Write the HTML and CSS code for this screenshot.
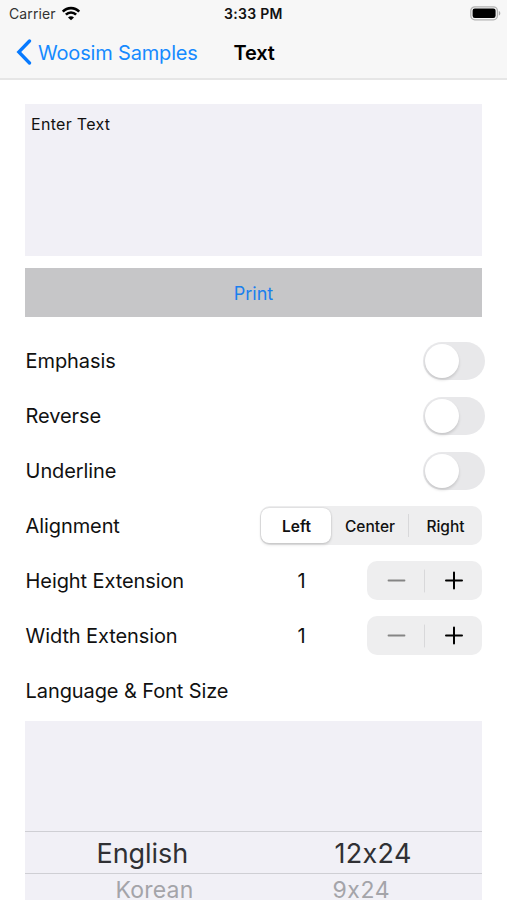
FILE: index.html
```html
<!DOCTYPE html>
<html lang="en">
<head>
<meta charset="utf-8">
<title>Text</title>
<link rel="stylesheet" href="styles.css">
</head>
<body>
<header class="header">
  <div class="status">
    <span class="carrier">Carrier</span>
    <svg class="wifi" width="20" height="15" viewBox="0 0 20 15" fill="none" stroke="#000" stroke-width="2.6"><path d="M1.8 5.6C6.3.9 13.7.9 18.2 5.6"/><path d="M4.9 8.7c2.8-2.9 7.4-2.9 10.2 0"/><path d="M10 14.2 7 11.4c1.7-1.6 4.3-1.6 6 0z" fill="#000" stroke="none"/></svg>
    <span class="clock">3:33 PM</span>
    <svg class="battery" width="31" height="15" viewBox="0 0 31 15"><rect x=".8" y=".8" width="26.6" height="13" rx="4" fill="#f7f7f7" stroke="#b2b2b2" stroke-width="1.3"/><rect x="2.6" y="2.6" width="23" height="9.4" rx="2.2"/><path d="M28.8 5c2 .6 2 4 0 4.6z" fill="#aaa"/></svg>
  </div>
  <nav class="nav">
    <svg class="chevron" width="16" height="26" viewBox="0 0 16 26" fill="none" stroke="#077aff" stroke-width="3.3" stroke-linecap="round" stroke-linejoin="miter"><path d="M13.5 2 2.8 13l10.7 11"/></svg>
    <a class="back">Woosim Samples</a>
    <h1 class="title">Text</h1>
  </nav>
</header>
<main class="main">
  <div class="entry"><span class="entry-text">Enter Text</span></div>
  <button class="print"><span>Print</span></button>
  <div class="row"><span class="label">Emphasis</span><span class="switch"></span></div>
  <div class="row"><span class="label">Reverse</span><span class="switch"></span></div>
  <div class="row"><span class="label">Underline</span><span class="switch"></span></div>
  <div class="row">
    <span class="label">Alignment</span>
    <div class="segments"><span class="segment selected">Left</span><span class="segment">Center</span><span class="segment last">Right</span></div>
  </div>
  <div class="row">
    <span class="label">Height Extension</span><span class="value">1</span>
    <div class="stepper"><svg width="115" height="39" viewBox="0 0 115 39" fill="none" stroke-linecap="round"><path d="M21.5 19.5h16" stroke="#858585" stroke-width="1.8"/><path d="M57.5 9v22" stroke="#d8d8da"/><path d="M79 19.5h16M87 11.5v16" stroke="#000" stroke-width="2"/></svg></div>
  </div>
  <div class="row">
    <span class="label">Width Extension</span><span class="value">1</span>
    <div class="stepper"><svg width="115" height="39" viewBox="0 0 115 39" fill="none" stroke-linecap="round"><path d="M21.5 19.5h16" stroke="#858585" stroke-width="1.8"/><path d="M57.5 9v22" stroke="#d8d8da"/><path d="M79 19.5h16M87 11.5v16" stroke="#000" stroke-width="2"/></svg></div>
  </div>
  <div class="row"><span class="label">Language &amp; Font Size</span></div>
  <div class="picker">
    <div class="option chosen"><span class="english">English</span><span class="size">12x24</span></div>
    <div class="option next"><span class="korean">Korean</span><span class="size-next">9x24</span></div>
  </div>
</main>
</body>
</html>
```
FILE: styles.css
```css
* { box-sizing: border-box; }
body {
  margin: 0;
  height: 900px;
  overflow: hidden;
  background: #fff;
  color: #111;
  font-family: Inter, "Liberation Sans", sans-serif;
  font-feature-settings: "calt" 0;
}
.header {
  height: 80px;
  background: #f7f7f7;
  border-bottom: 2px solid #e6e6e6;
}
.status {
  display: grid;
  grid-template-columns: 52px 163px 1fr 37px;
  height: 27px;
  padding-left: 9px;
  align-items: center;
  font-size: 14px;
}
.carrier { color: #333; letter-spacing: .1px; }
.clock { font-weight: 600; font-size: 14px; letter-spacing: .3px; }
.battery { margin-top: -1px; }
.nav {
  display: flex;
  height: 50px;
  padding-left: 16px;
  align-items: center;
  font-size: 20px;
}
.back { width: 195.5px; margin-left: 6px; padding-top: 1px; color: #168aff; letter-spacing: -.17px; white-space: nowrap; }
.title { margin: 0; padding-top: 1px; color: #000; font-size: 20px; font-weight: 600; letter-spacing: -.2px; }
.main { padding: 24px 25px 0; }
.entry {
  height: 152px;
  padding: 10px 6px;
  background: #f1f0f6;
  font-size: 16px;
  letter-spacing: .3px;
  line-height: 20px;
}
.print {
  display: block;
  width: 457px;
  height: 49px;
  margin: 12px 0 16px;
  padding: 0;
  border: 0;
  background: #c6c6c8;
  color: #1a7fee;
  font: 18px/50px Inter, sans-serif;
}
.print span { position: relative; top: .5px; }
.row {
  display: flex;
  height: 55px;
  align-items: center;
}
.label { flex: 1; padding-left: .6px; font-size: 20px; letter-spacing: -.1px; white-space: nowrap; }
.switch {
  width: 62px;
  height: 38px;
  margin-right: -3px;
  padding: 2px;
  border-radius: 19px;
  background: #e8e8ea;
}
.switch::before {
  content: "";
  display: block;
  width: 34px;
  height: 34px;
  margin-left: -.5px;
  border-radius: 50%;
  background: #fff;
  box-shadow: 0 2px 3px rgba(0, 0, 0, .15);
}
.segments {
  display: grid;
  grid-template-columns: 70px 77px 74px;
  width: 222px;
  height: 39px;
  padding: 2px 0 2px 1px;
  border-radius: 10px;
  background: #eeeeef;
}
.segment {
  display: flex;
  align-items: center;
  justify-content: center;
  padding: 1px 0 0 1px;
  font-size: 15.5px;
  font-weight: 500;
}
.selected {
  border-radius: 8px;
  background: #fff;
  box-shadow: 0 0 2px rgba(0, 0, 0, .18), 0 2px 3px rgba(0, 0, 0, .12);
  font-weight: 600;
}
.last {
  background: linear-gradient(#d8d8da, #d8d8da) left center / 1px 23px no-repeat;
}
.value { width: 20px; margin-right: 55.5px; text-align: center; font-size: 20px; }
.stepper { width: 115px; height: 39px; border-radius: 10px; background: #eeeeef; }
.picker {
  height: 179px;
  margin-top: 3px;
  padding-top: 110px;
  background: #f1f0f6;
}
.option { display: grid; grid-template-columns: 1fr 1fr; white-space: nowrap; }
.chosen {
  height: 43px;
  border-top: 1px solid #cfcfd4;
  border-bottom: 1px solid #cfcfd4;
  color: #303034;
  font-size: 27px;
  line-height: 43px;
}
.next { height: 26px; color: #a4a4a9; font-size: 23px; line-height: 33px; }
.english { padding-left: 71.5px; letter-spacing: -.05px; }
.size { padding-left: 81px; letter-spacing: .3px; }
.korean { padding-left: 90.5px; letter-spacing: .2px; }
.size-next { padding-left: 79px; letter-spacing: .6px; }
```
